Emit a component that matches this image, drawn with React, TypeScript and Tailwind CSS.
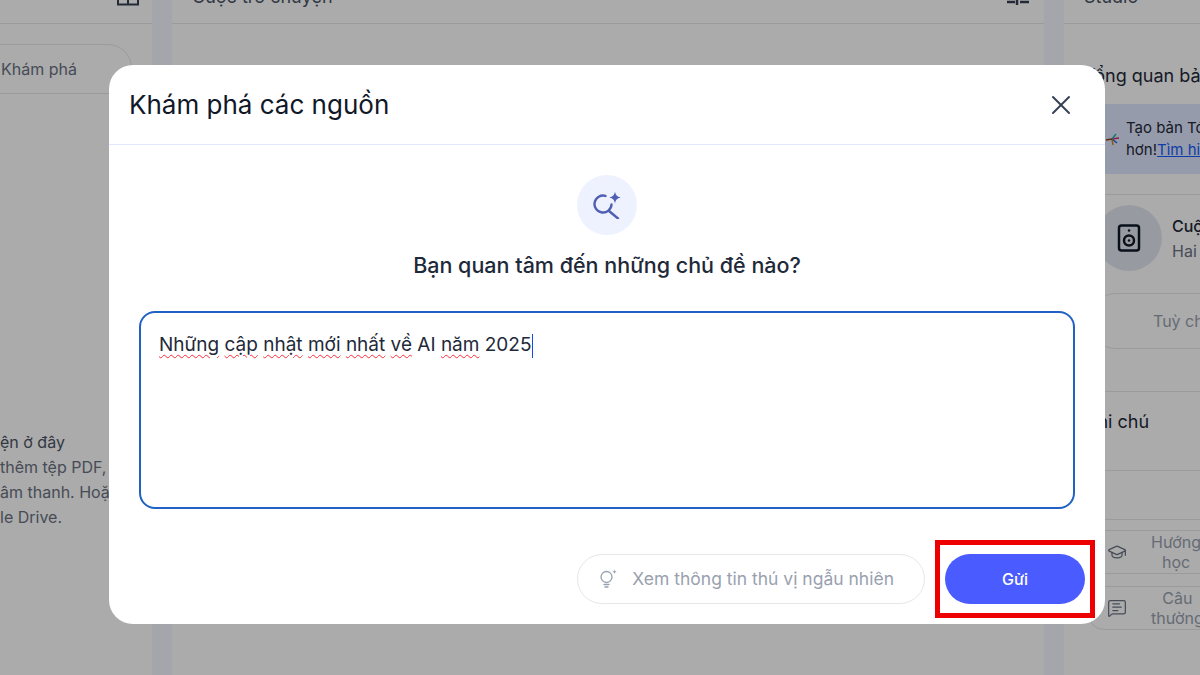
import { GraduationCap, MessageSquareText, Speaker, X } from "lucide-react";

const SEARCH_SPARK = (
  <svg viewBox="0 0 28 28" className="size-7 text-[#4f5fb3]" fill="none">
    <path
      d="M12.5 4.9A8.5 8.5 0 1 0 18.5 13.5"
      stroke="currentColor"
      strokeWidth="2.4"
      strokeLinecap="round"
    />
    <path d="M16 20l9 7.5" stroke="currentColor" strokeWidth="2.4" strokeLinecap="round" />
    <path
      d="M22 0.5c.6 3.6 2 5 5.500 6-3.500 1-4.900 2.400-5.500 6-.6-3.600-2-5-5.500-6 3.500-1 4.900-2.400 5.500-6z"
      fill="currentColor"
    />
  </svg>
);

const BULB_SPARK = (
  <svg viewBox="0 0 20 20" className="size-5 text-gray-400" fill="none">
    <circle cx="8.500" cy="8" r="5.500" stroke="currentColor" strokeWidth="1.300" />
    <path d="M6 15.500h5M7 18h3" stroke="currentColor" strokeWidth="1.300" strokeLinecap="round" />
    <path
      d="M16.500 0.500c.2 1.400.8 2 2.300 2.300-1.500.3-2.100.9-2.300 2.300-.2-1.400-.8-2-2.300-2.300 1.500-.3 2.100-.9 2.300-2.300z"
      fill="currentColor"
    />
  </svg>
);

const CONFETTI = (
  <svg viewBox="0 0 16 16" className="size-4 shrink-0">
    <path d="M8 8l7-1" stroke="#db2777" strokeWidth="1.500" />
    <path d="M8 8l4-5" stroke="#14b8a6" strokeWidth="1.500" />
    <path d="M8 8l5 4" stroke="#2563eb" strokeWidth="1.500" />
    <path d="M8 8l1 6" stroke="#ca8a04" strokeWidth="1.500" />
    <path d="M2 9l6-1" stroke="#92400e" strokeWidth="1.500" />
  </svg>
);

const Squiggle = ({ children }: { children: string }) => (
  <span className="underline decoration-wavy decoration-red-500 decoration-1 underline-offset-3">
    {children}
  </span>
);

const LeftPanel = () => (
  <div className="flex w-38 shrink-0 flex-col bg-white text-gray-500">
    <div className="flex h-6 shrink-0 items-start justify-end border-b border-gray-200 pr-3">
      <svg viewBox="0 0 24 24" className="size-6 text-gray-700" fill="none" stroke="currentColor" strokeWidth="2">
        <path d="M2 0v4.500h20V0M12 0v4.500" />
      </svg>
    </div>
    <div className="mt-5 -ml-5 flex h-12.5 w-38 items-center rounded-tr-3xl border border-gray-200 pl-5">
      <span className="text-base">Khám phá</span>
    </div>
    <div className="mt-84 flex flex-col gap-px text-base whitespace-nowrap">
      <span className="text-gray-600">ện ở đây</span>
      <span>thêm tệp PDF,</span>
      <span>âm thanh. Hoặc</span>
      <span>le Drive.</span>
    </div>
  </div>
);

const CenterPanel = () => (
  <div className="flex flex-1 flex-col bg-white">
    <div className="flex h-6 shrink-0 items-end justify-between border-b border-gray-200 pr-3.5 pb-3 pl-5">
      <span className="text-lg text-gray-600">Cuộc trò chuyện</span>
      <svg viewBox="0 0 24 24" className="-mb-3 size-6 self-start text-gray-700" fill="none" stroke="currentColor" strokeWidth="2.500">
        <path d="M1 2h8M14 2h9M11 0v5" />
      </svg>
    </div>
  </div>
);

const RightPanel = () => (
  <div className="flex w-34 shrink-0 flex-col overflow-hidden bg-white whitespace-nowrap text-gray-800">
    <div className="flex h-6 shrink-0 items-end border-b border-gray-200 px-5 pb-3">
      <span className="text-lg text-gray-600">Studio</span>
    </div>
    <div className="mt-9.5 pl-5 text-lg leading-7">Tổng quan bản</div>
    <div className="mt-3.5 flex h-17.5 items-center gap-1.5 bg-indigo-100 pl-10 text-[15px]">
      {CONFETTI}
      <div className="flex flex-col">
        <span>Tạo bản Tóm</span>
        <span>
          hơn!<span className="text-blue-600 underline">Tìm hiểu</span>
        </span>
      </div>
    </div>
    <div className="mt-5 flex items-center gap-2.5 border-t border-gray-200 pt-2.5 pl-8">
      <div className="flex size-16.5 shrink-0 items-center justify-center rounded-full bg-slate-200">
        <Speaker className="size-7.5 text-gray-900" />
      </div>
      <div className="flex flex-col gap-px">
        <span className="text-base font-medium">Cuộc trò</span>
        <span className="text-base text-gray-500">Hai người</span>
      </div>
    </div>
    <div className="mt-5.5 ml-6 flex h-14 w-40 items-center rounded-full border border-gray-200 pl-16 text-base text-gray-400">
      Tuỳ chỉnh
    </div>
    <div className="mt-10.5 border-t border-gray-200 pt-4 pl-5 text-lg leading-7">Ghi chú</div>
    <div className="mt-8.5 h-12.5 border-y border-gray-200" />
    <div className="mt-2.5 ml-6 flex flex-col gap-3 text-base text-gray-400">
      <div className="flex h-11 w-40 items-center gap-6 rounded-2xl border border-gray-200 pl-4.5 leading-5">
        <GraduationCap className="size-5 shrink-0 text-gray-500" strokeWidth={1.500} />
        <span className="flex flex-col items-center">
          <span>Hướng</span>
          <span>học</span>
        </span>
      </div>
      <div className="flex h-11 w-40 items-center gap-6 rounded-2xl border border-gray-200 pl-4.5 leading-5">
        <MessageSquareText className="size-5 shrink-0 text-gray-500" strokeWidth={1.500} />
        <span className="flex flex-col items-center">
          <span>Câu</span>
          <span>thường</span>
        </span>
      </div>
    </div>
  </div>
);

export default function App() {
  return (
    <div className="relative h-[675px] w-[1200px] overflow-hidden bg-[#f6f8ff] font-['Inter',sans-serif]">
      <div className="flex h-full gap-5">
        <LeftPanel />
        <CenterPanel />
        <RightPanel />
      </div>

      <div className="absolute inset-0 bg-black/33" />

      <div className="absolute top-[65px] left-[109px] flex h-[559px] w-[996px] flex-col rounded-3xl bg-white">
        <div className="flex h-20 shrink-0 items-center justify-between border-b border-indigo-100 pr-7 pl-5">
          <h1 className="text-[26px] text-gray-900">Khám phá các nguồn</h1>
          <X className="size-8 text-gray-700" strokeWidth={1.500} />
        </div>

        <div className="flex flex-col items-center px-7.5 pt-7.5">
          <div className="flex size-15 items-center justify-center rounded-full bg-indigo-50">
            {SEARCH_SPARK}
          </div>
          <h2 className="mt-4 text-[21.5px] leading-7 font-medium text-gray-800">
            Bạn quan tâm đến những chủ đề nào?
          </h2>
          <div className="mt-8 h-49.5 w-full rounded-2xl border-2 border-[#1f62c4] px-4.5 py-4.5 text-[19px] leading-7 text-gray-800">
            <Squiggle>Những</Squiggle> <Squiggle>cập</Squiggle> <Squiggle>nhật</Squiggle>{" "}
            <Squiggle>mới</Squiggle> <Squiggle>nhất</Squiggle> <Squiggle>về</Squiggle> AI{" "}
            <Squiggle>năm</Squiggle> 2025
            <span className="ml-px inline-block h-6 w-px bg-blue-700 align-middle" />
          </div>
        </div>

        <div className="mt-auto mb-5 flex items-center justify-end gap-5 pr-5">
          <div className="flex h-12.5 items-center gap-3.5 rounded-full border border-gray-200 pr-7.5 pl-5 text-[17.5px] text-gray-400">
            {BULB_SPARK}
            Xem thông tin thú vị ngẫu nhiên
          </div>
          <div className="relative">
            <button className="flex h-12.5 w-35 items-center justify-center rounded-full bg-[#4a5cff] text-base font-medium text-white">
              Gửi
            </button>
            <div className="absolute -inset-x-2.5 -top-3.5 -bottom-3.5 border-[5px] border-[#ee0000]" />
          </div>
        </div>
      </div>
    </div>
  );
}
